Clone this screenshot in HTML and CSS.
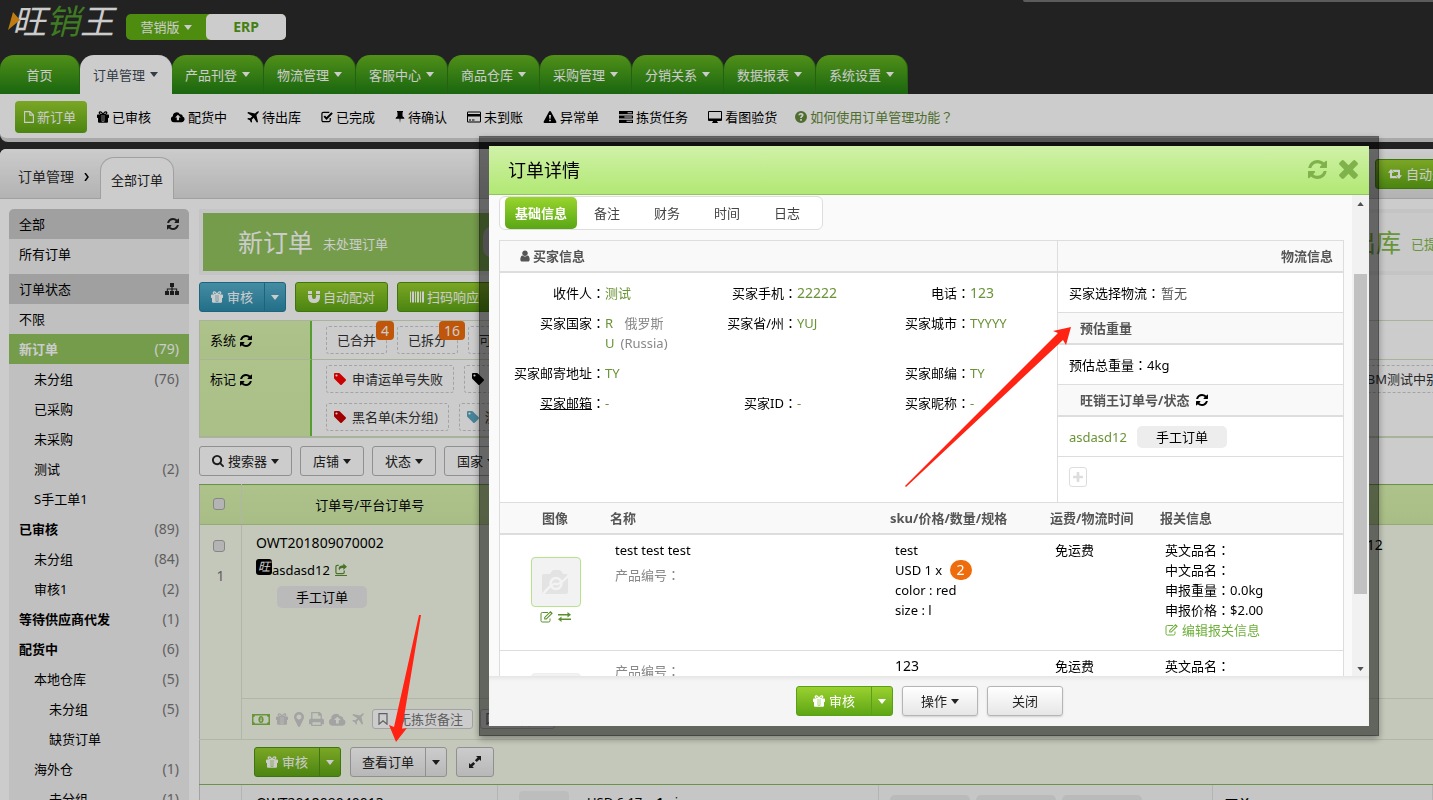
FILE: index.html
```html
<!DOCTYPE html>
<html lang="zh-CN">
<head>
<meta charset="utf-8">
<title>旺销王 - 订单管理</title>
<link rel="stylesheet" href="styles.css">
</head>
<body>
<svg class="sprite" aria-hidden="true">
  <symbol id="caret" viewBox="0 0 8 5"><path d="M0 0h8L4 5z"/></symbol>
  <symbol id="refresh" viewBox="128 128 1536 1536"><path d="M1639 1056q0 5-1 7-64 268-268 434.500t-478 166.500q-146 0-282.500-55t-243.500-157l-129 129q-19 19-45 19t-45-19-19-45v-448q0-26 19-45t45-19h448q26 0 45 19t19 45-19 45l-137 137q71 66 161 102t187 36q134 0 250-65t186-179q11-17 53-117 8-23 30-23h192q13 0 22.500 9.500t9.500 22.500zm25-800v448q0 26-19 45t-45 19h-448q-26 0-45-19t-19-45 19-45l138-138q-148-137-349-137-134 0-250 65t-186 179q-11 17-53 117-8 23-30 23h-199q-13 0-22.500-9.500t-9.500-22.500v-7q65-268 270-434.500t480-166.500q146 0 284 55.500t245 156.500l130-129q19-19 45-19t45 19 19 45z"/></symbol>
  <symbol id="times" viewBox="300 430 1192 1192"><path transform="translate(0 66)" d="M1490 1322q0 40-28 68l-136 136q-28 28-68 28t-68-28l-294-294-294 294q-28 28-68 28t-68-28l-136-136q-28-28-28-68t28-68l294-294-294-294q-28-28-28-68t28-68l136-136q28-28 68-28t68 28l294 294 294-294q28-28 68-28t68 28l136 136q28 28 28 68t-28 68l-294 294 294 294q28 28 28 68z"/></symbol>
  <symbol id="search" viewBox="64 128 1664 1664"><path d="M1216 832q0-185-131.500-316.500t-316.500-131.500-316.500 131.500-131.500 316.500 131.500 316.500 316.500 131.500 316.500-131.500 131.500-316.500zm512 832q0 52-38 90t-90 38q-54 0-90-38l-343-342q-179 124-399 124-143 0-273.500-55.500t-225-150-150-225-55.500-273.500 55.500-273.500 150-225 225-150 273.500-55.500 273.500 55.500 225 150 150 225 55.500 273.500q0 220-124 399l343 343q37 37 37 90z"/></symbol>
  <symbol id="user" viewBox="206 128 1380 1536"><path d="M1536 1399q0 109-62.500 187t-150.500 78h-854q-88 0-150.500-78t-62.500-187q0-85 8.500-160.500t31.500-152 58.500-131 94-89 134.500-34.500q131 128 313 128t313-128q76 0 134.500 34.500t94 89 58.500 131 31.500 152 8.500 160.500zm-256-887q0 159-112.500 271.500t-271.500 112.500-271.500-112.500-112.500-271.500 112.500-271.500 271.500-112.500 271.500 112.500 112.500 271.500z"/></symbol>
  <symbol id="plus" viewBox="192 128 1408 1408"><path d="M1600 736v192q0 40-28 68t-68 28h-416v416q0 40-28 68t-68 28h-192q-40 0-68-28t-28-68v-416h-416q-40 0-68-28t-28-68v-192q0-40 28-68t68-28h416v-416q0-40 28-68t68-28h192q40 0 68 28t28 68v416h416q40 0 68 28t28 68z"/></symbol>
  <symbol id="pin-map" viewBox="384 128 1024 1536"><path d="M1152 640q0-106-75-181t-181-75-181 75-75 181 75 181 181 75 181-75 75-181zm256 0q0 109-33 179l-364 774q-16 33-47.500 52t-67.500 19-67.500-19-46.500-52l-365-774q-33-70-33-179 0-212 150-362t362-150 362 150 150 362z"/></symbol>
  <symbol id="gift" viewBox="0 0 12 12"><path fill-rule="evenodd" d="M0 4.200q0-.7.700-.7H3.200Q1.300 3 1.600 1.600 2 .2 3.500.3 4.800.4 6 2.200 7.200.4 8.500.3q1.500-.1 1.900 1.300.3 1.400-1.600 1.900h2.500q.7 0 .7.700v2.400q0 .3-.4.300H11v3.800q0 1-1 1H2q-1 0-1-1V6.900H.4Q0 6.900 0 6.600zM2.800 2q0 .8 1 .8h1.300Q4.300 1.500 3.600 1.400q-.8 0-.8.600zm6.400 0q0-.6-.8-.6-.7.100-1.500 1.400h1.300q1 0 1-.8zM4.700 4v6.400h2.600V4z"/><path d="M5.300 4h1.400v6H5.300z"/></symbol>
  <symbol id="cloud-up" viewBox="0 0 15 11"><path fill-rule="evenodd" d="M3.300 11A3.200 3.200 0 0 1 2 4.800 4.100 4.100 0 0 1 9.700 2.700 2.200 2.200 0 0 1 12.500 5a3.100 3.100 0 0 1-.7 6zM6.200 6v3h2.400V6h1.800L7.400 3 4.400 6z"/></symbol>
  <symbol id="plane" viewBox="0 0 12 12"><path d="M11.800.2Q11 0 10 .8L8 2.600 1.200 1 .3 2l5 3.300L3.300 7.300l-2.100-.4L.2 7.900l2.600 1.300L4.100 11.800l1-1-.4-2.100 2-2 3.300 5 1-.9L9.400 4l1.800-2q.8-1 .6-1.800z"/></symbol>
  <symbol id="check-sq" viewBox="0 0 13 12"><path d="M10 7v2.500Q10 11 8.500 11h-6Q1 11 1 9.500v-7Q1 1 2.500 1H9" fill="none" stroke="currentColor" stroke-width="1.300"/><path d="m3.500 5 2.500 2.700L12 1.500" fill="none" stroke="currentColor" stroke-width="2.200"/></symbol>
  <symbol id="thumbtack" viewBox="0 0 9 12"><path d="M1.500 0h6v1.200H7v4q1.700.8 2 2.500H5L4.500 12 4 7.700H0q.3-1.700 2-2.500v-4h-.5z"/></symbol>
  <symbol id="card" viewBox="0 0 14 11"><path fill-rule="evenodd" d="M1.300 0h11.400Q14 0 14 1.300v8.400q0 1.300-1.300 1.300H1.300Q0 11 0 9.700V1.300Q0 0 1.300 0zM1 1v1.600h12V1zm0 4v5h12V5zm1 3h2v1H2zm3 0h2.500v1H5z"/></symbol>
  <symbol id="warn" viewBox="0 0 13 12"><path fill-rule="evenodd" d="M6.500 0q.6 0 .9.500l5.400 10q.5 1.500-.9 1.500H1.100q-1.400 0-.9-1.500l5.400-10Q5.900 0 6.500 0zm-1 4 .4 3.700h1.200L7.500 4zm.1 4.700v1.600h1.800V8.700z"/></symbol>
  <symbol id="tasks" viewBox="0 0 13 11"><path fill-rule="evenodd" d="M0 0h13v3H0zm8 1v1h4V1zM0 4h13v3H0zm5 1v1h7V5zM0 8h13v3H0zm7 1v1h5V9z"/></symbol>
  <symbol id="desktop" viewBox="0 0 14 12"><path fill-rule="evenodd" d="M1 0h12q1 0 1 1v8q0 1-1 1H9q0 1 .8 1.300V12H4.200v-.7Q5 11 5 10H1q-1 0-1-1V1q0-1 1-1zm0 1v6.500h12V1z"/></symbol>
  <symbol id="question" viewBox="0 0 11 11"><path fill-rule="evenodd" d="M5.500 0a5.500 5.500 0 1 1 0 11 5.500 5.500 0 0 1 0-11zM3 4h1.600Q4.800 3 5.700 3.200q.8.500 0 1.300-1.200.8-1 2h1.600q0-.8 1-1.400 1-1 .3-2.300Q6.700 1.600 5 1.900 3.200 2.300 3 4zm1.700 3.300v1.600h1.600V7.300z"/></symbol>
  <symbol id="file" viewBox="0 0 10 12"><path d="M.6.600h5.400l3.400 3.300v7.500H.6zM5.800.6v3.500h3.600" fill="none" stroke="currentColor" stroke-width="1.100"/></symbol>
  <symbol id="sitemap" viewBox="0 0 14 12"><path d="M5 0h4v4H7.600v1.400h4.600V8H14v4h-4V8h1.200V6.400H7.600V8H9v4H5V8h1.400V6.400H2.800V8H4v4H0V8h1.800V5.400h4.600V4H5z"/></symbol>
  <symbol id="magnet" viewBox="0 0 12 12"><path d="M0 0h4v3H0zM8 0h4v3H8zM0 4h4v2q0 2 2 2t2-2V4h4v2.500Q11.500 12 6 12T0 6.500z"/></symbol>
  <symbol id="barcode" viewBox="0 0 14 11"><path d="M0 0h1v11H0zM2 0h2v11H2zM5 0h1v11H5zM7 0h2v11H7zM10 0h1v11h-1zM12 0h2v11h-2z"/></symbol>
  <symbol id="tag" viewBox="0 0 12 12"><path fill-rule="evenodd" d="M0 1q0-1 1-1h4l.9.500 5.800 5.800q.6.700 0 1.400L7.700 11.700q-.7.600-1.400 0L.5 5.900Q0 5.500 0 5zm2.500.4a1.100 1.100 0 1 0 0 2.200 1.100 1.100 0 0 0 0-2.200z"/></symbol>
  <symbol id="share" viewBox="0 0 13 12"><path d="M10 7.500v2Q10 11 8.500 11h-6Q1 11 1 9.500v-6Q1 2 2.500 2H4" fill="none" stroke="currentColor" stroke-width="1.300"/><path d="M9 0l4 3.500L9 7V5Q5 4.700 4.600 8 2 2.200 9 2z"/></symbol>
  <symbol id="money" viewBox="0 0 18 11"><path fill-rule="evenodd" d="M0 0h18v11H0zm3 1.500Q3 3 1.500 3v5Q3 8 3 9.500h12Q15 8 16.500 8V3Q15 3 15 1.500zM9 2c3.500 0 3.500 7 0 7s-3.500-7 0-7zM8 4h.6v2.500H8v.8h2v-.8h-.5V3.400z"/></symbol>
  <symbol id="print" viewBox="0 0 14 13"><path fill-rule="evenodd" d="M2 0h8l2 2v4q2 0 2 2v3.500h-2V13H2v-1.500H0V8q0-2 2-2zm1.200 1.200v5h7.600V3.400H8.600V1.200zm0 8.300v2.300h7.600V9.500z"/></symbol>
  <symbol id="bookmark" viewBox="0 0 10 12"><path d="M1 .6h8v10.600L5 7.800 1 11.200z" fill="none" stroke="currentColor" stroke-width="1.200"/></symbol>
  <symbol id="expand" viewBox="0 0 12 12"><path d="M7 0h5v5l-1.600-1.600-2.700 2.700-1.800-1.800 2.700-2.700zM5 12H0V7l1.600 1.600 2.700-2.700 1.800 1.800-2.700 2.700z"/></symbol>
  <symbol id="retweet" viewBox="0 0 14 10"><path d="M3 0l3 3.700H4V7h4l2 2.300H2.500Q2 9.300 2 8.700v-5H0zM11 10 8 6.300h2V3H6L4 .7h7.500q.5 0 .5.600v5h2z"/></symbol>
  <symbol id="edit" viewBox="0 0 13 12"><path d="M10 7.500V9.700Q10 11 8.700 11H2.300Q1 11 1 9.700V2.800Q1 1.500 2.300 1.500H8" fill="none" stroke="currentColor"/><path d="M4.200 8.600V6.300L10.500 0l2.300 2.300-6.300 6.300zm1-1.800v.8h.8l5-5-.8-.8z" fill-rule="evenodd"/></symbol>
  <symbol id="exchange" viewBox="0 0 13 10"><path d="M0 2h9.500V0L13 2.700 9.500 5.400V3.400H0zM13 6.600H3.500v-2L0 7.300 3.500 10V8H13z"/></symbol>
  <symbol id="camera" viewBox="0 0 28 24"><path d="M2 4h6l2-3q.6-1 2-1h5q1.400 0 2 1l2 3h3q2 0 2 2v16q0 2-2 2H2q-2 0-2-2V6q0-2 2-2z" fill="#e3e3e3"/><circle cx="14" cy="13.500" r="5.500" fill="none" stroke="#f3f3f3" stroke-width="2.500"/><path d="M1 24q10-12 13-10t14-10" fill="none" stroke="#f3f3f3" stroke-width="2.500"/></symbol>
</svg>

<div class="page">
  <header class="top">
    <div class="brand">
      <div class="logo">
        <svg class="beak" viewBox="0 0 12 18"><path d="M0 18 5 0l7 8z"/></svg>
        <span>旺</span><span class="logo-green">销</span><span>王</span>
      </div>
      <div class="switch">
        <button class="sw-on" type="button">营销版<svg class="caret"><use href="#caret"/></svg></button>
        <button class="sw-erp" type="button">ERP</button>
      </div>
    </div>
    <nav class="tabs">
      <a href="#" class="tab home">首页</a>
      <a href="#" class="tab active">订单管理<svg class="caret"><use href="#caret"/></svg></a>
      <a href="#" class="tab">产品刊登<svg class="caret"><use href="#caret"/></svg></a>
      <a href="#" class="tab">物流管理<svg class="caret"><use href="#caret"/></svg></a>
      <a href="#" class="tab">客服中心<svg class="caret"><use href="#caret"/></svg></a>
      <a href="#" class="tab">商品仓库<svg class="caret"><use href="#caret"/></svg></a>
      <a href="#" class="tab">采购管理<svg class="caret"><use href="#caret"/></svg></a>
      <a href="#" class="tab">分销关系<svg class="caret"><use href="#caret"/></svg></a>
      <a href="#" class="tab">数据报表<svg class="caret"><use href="#caret"/></svg></a>
      <a href="#" class="tab">系统设置<svg class="caret"><use href="#caret"/></svg></a>
    </nav>
    <i class="top-strip"></i>
  </header>

  <nav class="submenu">
    <a href="#" class="current"><svg class="w10"><use href="#file"/></svg>新订单</a>
    <a href="#"><svg class="w12"><use href="#gift"/></svg>已审核</a>
    <a href="#"><svg class="w14"><use href="#cloud-up"/></svg>配货中</a>
    <a href="#"><svg class="w12"><use href="#plane"/></svg>待出库</a>
    <a href="#"><svg class="w12"><use href="#check-sq"/></svg>已完成</a>
    <a href="#"><svg class="w10"><use href="#thumbtack"/></svg>待确认</a>
    <a href="#"><svg class="w14"><use href="#card"/></svg>未到账</a>
    <a href="#"><svg class="w14"><use href="#warn"/></svg>异常单</a>
    <a href="#"><svg class="w14"><use href="#tasks"/></svg>拣货任务</a>
    <a href="#"><svg class="w14"><use href="#desktop"/></svg>看图验货</a>
    <a href="#" class="help"><svg class="w12"><use href="#question"/></svg><span>如何使用订单管理功能<span class="mid">？</span></span></a>
  </nav>

  <main class="panel">
    <div class="crumbs">
      <span class="crumb">订单管理</span>
      <svg class="chev" viewBox="0 0 5 8"><path d="m1 0 3 4-3 4" fill="none" stroke="currentColor" stroke-width="1.500"/></svg>
      <a href="#" class="crumb-tab">全部订单</a>
      <button class="btn green auto" type="button"><svg class="w14"><use href="#retweet"/></svg>自动处理</button>
    </div>

    <div class="columns">
      <aside class="side">
        <div class="side-head"><span>全部</span><svg class="w12"><use href="#refresh"/></svg></div>
        <a href="#" class="gap-after"><span>所有订单</span></a>
        <div class="side-head"><span>订单状态</span><svg class="w14"><use href="#sitemap"/></svg></div>
        <a href="#"><span>不限</span></a>
        <a href="#" class="sel"><b>新订单</b><em>(79)</em></a>
        <a href="#" class="l1"><span>未分组</span><em>(76)</em></a>
        <a href="#" class="l1"><span>已采购</span></a>
        <a href="#" class="l1"><span>未采购</span></a>
        <a href="#" class="l1"><span>测试</span><em>(2)</em></a>
        <a href="#" class="l1"><span>S手工单1</span></a>
        <a href="#"><b>已审核</b><em>(89)</em></a>
        <a href="#" class="l1"><span>未分组</span><em>(84)</em></a>
        <a href="#" class="l1"><span>审核1</span><em>(2)</em></a>
        <a href="#"><b>等待供应商代发</b><em>(1)</em></a>
        <a href="#"><b>配货中</b><em>(6)</em></a>
        <a href="#" class="l1"><span>本地仓库</span><em>(5)</em></a>
        <a href="#" class="l2"><span>未分组</span><em>(5)</em></a>
        <a href="#" class="l2"><span>缺货订单</span></a>
        <a href="#" class="l1"><span>海外仓</span><em>(1)</em></a>
        <a href="#" class="l2"><span>未分组</span><em>(1)</em></a>
      </aside>

      <section class="content">
        <div class="steps">
          <div class="step on"><h2>新订单</h2><span>未处理订单</span><i class="pill-note"></i></div>
          <div class="step"><h2>配货中</h2><span>正在配货</span></div>
          <div class="step"><h2>待出库</h2><span>已提交物流</span></div>
        </div>

        <div class="actions">
          <div class="split blue"><button type="button"><svg class="w12"><use href="#gift"/></svg>审核</button><button type="button" aria-label="更多"><svg class="caret"><use href="#caret"/></svg></button></div>
          <button class="btn green" type="button"><svg class="w12"><use href="#magnet"/></svg>自动配对</button>
          <button class="btn green" type="button"><svg class="w14"><use href="#barcode"/></svg>扫码响应</button>
        </div>

        <div class="filters">
          <div class="f-label">系统<svg class="w12"><use href="#refresh"/></svg></div>
          <div class="f-body">
            <div class="chips">
              <span class="chip">已合并<i class="badge">4</i></span>
              <span class="chip">已拆分<i class="badge">16</i></span>
              <span class="chip">可合并</span>
            </div>
          </div>
          <div class="f-label">标记<svg class="w12"><use href="#refresh"/></svg></div>
          <div class="f-body">
            <div class="chips">
              <span class="chip"><svg class="w12 red"><use href="#tag"/></svg>申请运单号失败</span>
              <span class="chip wide"><svg class="w12 black"><use href="#tag"/></svg>待跟进</span>
              <span class="chip"><svg class="w12 black"><use href="#tag"/></svg>FBM测试中别动</span>
            </div>
            <div class="chips">
              <span class="chip"><svg class="w12 dark-red"><use href="#tag"/></svg>黑名单(未分组)</span>
              <span class="chip"><svg class="w12 teal"><use href="#tag"/></svg>测试标记</span>
            </div>
          </div>
        </div>

        <div class="selects">
          <button class="btn plain" type="button"><svg class="w12"><use href="#search"/></svg>搜索器<svg class="caret"><use href="#caret"/></svg></button>
          <button class="btn plain" type="button">店铺<svg class="caret"><use href="#caret"/></svg></button>
          <button class="btn plain" type="button">状态<svg class="caret"><use href="#caret"/></svg></button>
          <button class="btn plain" type="button">国家<svg class="caret"><use href="#caret"/></svg></button>
        </div>

        <table class="orders">
          <colgroup><col class="o1"><col class="o2"><col class="o3"><col class="o4"><col></colgroup>
          <thead><tr><th><input type="checkbox" aria-label="全选"></th><th>订单号/平台订单号</th><th></th><th></th><th></th></tr></thead>
          <tbody>
            <tr class="main-row">
              <td class="pick"><input type="checkbox" aria-label="选择订单"><p>1</p></td>
              <td class="order-cell">
                <p class="num">OWT201809070002</p>
                <p class="src"><i class="mini">旺</i>asdasd12 <a href="#" aria-label="打开"><svg class="w12"><use href="#share"/></svg></a></p>
                <span class="type">手工订单</span>
              </td>
              <td></td><td></td><td class="date num">2018-09-07 11:15:12</td>
            </tr>
            <tr class="note-row">
              <td></td>
              <td colspan="4"><div class="notes">
                <svg class="cash"><use href="#money"/></svg>
                <svg class="w14"><use href="#gift"/></svg>
                <svg class="w10 tall"><use href="#pin-map"/></svg>
                <svg class="w15"><use href="#print"/></svg>
                <svg class="w17"><use href="#cloud-up"/></svg>
                <svg class="w14"><use href="#plane"/></svg>
                <button type="button" class="note"><svg class="w10"><use href="#bookmark"/></svg>无拣货备注</button>
                <button type="button" class="note"><svg class="w10"><use href="#bookmark"/></svg>无备注</button>
              </div></td>
            </tr>
            <tr class="tool-row"><td colspan="5"><div class="tools">
              <div class="split green"><button type="button"><svg class="w12"><use href="#gift"/></svg>审核</button><button type="button" aria-label="更多"><svg class="caret"><use href="#caret"/></svg></button></div>
              <div class="split plain"><button type="button">查看订单</button><button type="button" aria-label="更多"><svg class="caret"><use href="#caret"/></svg></button></div>
              <button class="btn plain" type="button" aria-label="展开"><svg class="w12"><use href="#expand"/></svg></button>
            </div></td></tr>
            <tr class="next-row">
              <td></td>
              <td class="order-cell num">OWT201809040013</td>
              <td><div class="goods"><i class="thumb-ph"></i><p>USD 6.17 x <b>1</b> piece</p></div></td>
              <td><div class="ph-row"><i></i><i></i><i></i></div></td>
              <td class="due"><b>下单</b></td>
            </tr>
          </tbody>
        </table>
      </section>
    </div>
  </main>
</div>

<div class="shade"></div>

<div class="modal" role="dialog" aria-labelledby="dlg-title">
  <header class="m-head">
    <h1 id="dlg-title">订单详情</h1>
    <button type="button" aria-label="刷新"><svg><use href="#refresh"/></svg></button>
    <button type="button" aria-label="关闭窗口"><svg><use href="#times"/></svg></button>
  </header>
  <div class="m-body">
    <div class="m-scroll">
      <nav class="m-tabs">
        <a href="#" class="on">基础信息</a><a href="#">备注</a><a href="#">财务</a><a href="#">时间</a><a href="#">日志</a>
      </nav>
      <div class="sheet">
        <div class="info">
          <section class="buyer">
            <h3><svg class="w10"><use href="#user"/></svg>买家信息</h3>
            <dl>
              <dt>收件人<span class="mid">：</span></dt><dd>测试</dd>
              <dt>买家手机<span class="mid">：</span></dt><dd class="num">22222</dd>
              <dt>电话<span class="mid">：</span></dt><dd class="num">123</dd>
              <dt>买家国家<span class="mid">：</span></dt><dd class="country"><span>R<br>U</span><small>俄罗斯<br>(Russia)</small></dd>
              <dt>买家省/州<span class="mid">：</span></dt><dd>YUJ</dd>
              <dt>买家城市<span class="mid">：</span></dt><dd>TYYYY</dd>
              <dt>买家邮寄地址<span class="mid">：</span></dt><dd class="span3">TY</dd>
              <dt>买家邮编<span class="mid">：</span></dt><dd>TY</dd>
              <dt><u>买家邮箱</u><span class="mid">：</span></dt><dd>-</dd>
              <dt>买家ID<span class="mid">：</span></dt><dd>-</dd>
              <dt>买家昵称<span class="mid">：</span></dt><dd>-</dd>
            </dl>
          </section>
          <section class="ship">
            <h3 class="right">物流信息</h3>
            <p>买家选择物流<span class="mid">：</span><span class="muted">暂无</span></p>
            <h3>预估重量</h3>
            <p>预估总重量<span class="mid">：</span>4kg</p>
            <h3>旺销王订单号/状态<svg class="w12 black"><use href="#refresh"/></svg></h3>
            <p><a href="#">asdasd12</a><span class="type">手工订单</span></p>
            <p class="last"><button type="button" class="add" aria-label="添加"><svg class="w10"><use href="#plus"/></svg></button></p>
          </section>
        </div>
        <table class="items">
          <colgroup><col class="c1"><col class="c2"><col class="c3"><col class="c1"><col></colgroup>
          <thead><tr><th class="center">图像</th><th>名称</th><th>sku/价格/数量/规格</th><th>运费/物流时间</th><th>报关信息</th></tr></thead>
          <tbody>
            <tr>
              <td><div class="pic"><span class="frame"><svg><use href="#camera"/></svg></span><span class="links"><svg class="w13"><use href="#edit"/></svg><svg class="w13"><use href="#exchange"/></svg></span></div></td>
              <td><p>test test test</p><p class="sku-no">产品编号<span class="mid">：</span></p></td>
              <td><p>test</p><p>USD 1 x <span class="qty">2</span></p><p>color : red</p><p>size : l</p></td>
              <td><p>免运费</p></td>
              <td><p>英文品名<span class="mid">：</span></p><p>中文品名<span class="mid">：</span></p><p>申报重量<span class="mid">：</span>0.0kg</p><p>申报价格<span class="mid">：</span>$2.00</p><p><a href="#"><svg class="w13"><use href="#edit"/></svg>编辑报关信息</a></p></td>
            </tr>
            <tr>
              <td><div class="pic"><span class="frame"></span></div></td>
              <td><p class="sku-no">产品编号<span class="mid">：</span></p></td>
              <td><p class="num">123</p></td>
              <td><p>免运费</p></td>
              <td><p>英文品名<span class="mid">：</span></p></td>
            </tr>
          </tbody>
        </table>
      </div>
    </div>
    <div class="bar"><svg class="arr up"><use href="#caret"/></svg><i></i><svg class="arr"><use href="#caret"/></svg></div>
  </div>
  <footer class="m-foot">
    <div class="split green bright"><button type="button"><svg class="w12"><use href="#gift"/></svg>审核</button><button type="button" aria-label="更多"><svg class="caret"><use href="#caret"/></svg></button></div>
    <button class="btn plain raised" type="button">操作<svg class="caret"><use href="#caret"/></svg></button>
    <button class="btn plain raised" type="button">关闭</button>
  </footer>
</div>

<svg class="marks" viewBox="0 0 1433 800" aria-hidden="true">
  <path d="M905 486 1058 333 1053 331 1071 327 1066 345 1063 340 906 487z"/>
  <path d="M421 615 402 729 407 728 396 742 389 725 394 727 419 615z"/>
</svg>
</body>
</html>
```

FILE: styles.css
```css
* { box-sizing: border-box; }
html, body { height: 100%; margin: 0; overflow: hidden; }
body, button, input {
  font-family: "Noto Sans", "Noto Sans CJK SC", sans-serif;
  font-size: 13px;
  line-height: 20px;
}
body { background: #2b2b2b; color: #000; text-spacing-trim: space-all; }
p, h1, h2, h3, dl, dd { margin: 0; }
h1, h2 { font-weight: 400; }
a { color: inherit; text-decoration: none; }
i, em { font-style: normal; }
button { border: 0; padding: 0; background: none; color: inherit; }
svg { fill: currentColor; flex: none; }
.sprite { position: absolute; width: 0; height: 0; }
.page { height: 100%; overflow: hidden; }
.mid { display: inline-block; line-height: 18px; font-family: "Noto Sans CJK TC", sans-serif; }
.num { font-size: 14px; }
.caret { width: 8px; height: 5px; }
.w10 { width: 10px; height: 12px; }
.w12 { width: 12px; height: 12px; }
.w13 { width: 13px; height: 12px; }
.w14 { width: 14px; height: 12px; }
.w15 { width: 15px; height: 14px; }
.w17 { width: 17px; height: 13px; }
.tall { height: 15px; }
.red { color: #ff0000; }
.dark-red { color: #c80000; }
.black { color: #000; }
.teal { color: #5aa5bf; }

/* header */
.top { position: relative; background: #2b2b2b; }
.top-strip { position: absolute; top: 0; right: 0; width: 410px; height: 2px; background: #737373; border-bottom-left-radius: 4px; }
.brand { display: flex; align-items: flex-start; height: 55px; padding-left: 12px; }
.logo { position: relative; display: flex; width: 106px; font-size: 34px; line-height: 42px; font-style: italic; color: #fff; }
.logo-green { color: #4f9a2c; }
.beak { position: absolute; left: -4px; top: 12px; width: 12px; height: 18px; fill: #f09a18; }
.switch { display: flex; margin: 14px 0 0 8px; border-radius: 5px; background: #62b015; }
.switch button { width: 80px; height: 26px; }
.sw-on { color: #fff; }
.sw-on .caret { margin: 0 0 2px 4px; }
.switch .sw-erp { background: #fff; color: #57a01a; border-radius: 5px; font-size: 14px; font-weight: 700; }
.tabs { display: flex; }
.tab {
  display: flex; align-items: center; justify-content: center; gap: 5px;
  width: 92px; height: 39px; color: #fff;
  background: linear-gradient(#65b41f, #218014);
  border-radius: 14px 14px 0 0; border-right: 1px solid #2f7a14;
}
.tab.home { width: 80px; }
.tab.active { background: #fff; color: #3f4c55; border-color: #fff; }

/* second level menu */
.submenu {
  display: flex; align-items: flex-start; height: 48px; padding: 7px 15px 0;
  background: #fff; border-bottom: 4px solid #d4d4d4; border-bottom-left-radius: 8px;
}
.submenu a { display: flex; align-items: center; gap: 3px; padding: 0 10px; line-height: 32px; }
.submenu .current { width: 72px; padding: 0 9px; color: #fff; background: linear-gradient(#9ad02f, #5ea615); border-radius: 4px; }
.submenu .help { color: #63893a; padding-left: 8px; }

/* work area */
.panel { margin-top: 7px; background: #fff; border-top-left-radius: 6px; overflow: hidden; min-height: 651px; }
.crumbs { display: flex; height: 50px; padding-left: 18px; background: linear-gradient(#fff, #e0e0e0); border-bottom: 1px solid #c9c9c9; }
.crumb { font-size: 14px; line-height: 56px; color: #2d2d2d; }
.chev { width: 5px; height: 8px; margin: 24px 11px 0 10px; }
.crumb-tab {
  height: 42px; margin-top: 8px; padding: 0 10px; line-height: 44px; color: #222;
  background: #fff; border: 1px solid #c9c9c9; border-bottom: 0; border-radius: 14px 14px 0 0;
}
.crumbs .auto { margin: 10px -38px 0 auto; }
.columns { display: flex; gap: 10px; padding: 10px 0 0 9px; }

.side { flex: 0 0 180px; background: #f0f0f0; border-radius: 5px 5px 0 0; overflow: hidden; }
.side > * { display: flex; align-items: center; justify-content: space-between; height: 30px; padding: 0 10px; }
.side .side-head { background: #c9c9c9; }
.side-head svg { color: #222; }
.side .gap-after { margin-bottom: 5px; }
.side em { font-size: 14px; color: #777; }
.side .l1 { padding-left: 25px; }
.side .l2 { padding-left: 40px; }
.side .sel { background: #92c45e; color: #fff; }
.side .sel em { color: #fff; }

.content { flex: 1; min-width: 0; }
.steps { display: flex; height: 66px; border: 4px solid #f5f5f5; border-right: 0; overflow: hidden; }
.step { flex: 0 0 544px; display: flex; align-items: center; gap: 10px; padding-left: 35px; color: #82bb48; background: #fcfcfc; }
.step.on { background: #92c45e; color: #fff; }
.step h2 { font-size: 25px; line-height: 52px; }
.step span { padding-top: 4px; }
.pill-note { width: 160px; height: 32px; margin-left: 85px; border-radius: 10px; background: #c8c8c8; }

.actions, .selects { display: flex; gap: 9px; }
.actions { margin-top: 7px; }
.btn, .split { height: 30px; border: 1px solid; border-radius: 3px; }
.btn { display: flex; align-items: center; justify-content: center; gap: 4px; padding: 0 12px; }
.actions .btn { gap: 3px; }
.split { display: flex; }
.split button { display: flex; align-items: center; justify-content: center; gap: 4px; padding: 0 11px; }
.split button + button { width: 21px; padding: 0; border-left: 1px solid; border-color: inherit; }
.green { color: #fff; border-color: #4f9314; background: linear-gradient(#9ad02f, #5ea615); }
.green.bright { border-color: #58a01a; }
.blue { color: #fff; border-color: #247f9c; background: linear-gradient(#56b0cc, #2c8bab); }
.plain { color: #222; border-color: #b5b5b5; background: linear-gradient(#fff, #e6e6e6); }
.raised { box-shadow: 0 1px 2px rgba(0, 0, 0, .15); }

.filters { display: grid; grid-template-columns: 112px 1fr; margin-top: 8px; border: 1px solid #d3e0c0; border-width: 1px 0 2px 1px; }
.f-label { display: flex; gap: 4px; padding: 9px 10px; background: linear-gradient(#d9f4ae, #d5f0ab); border-right: 2px solid #6bc53c; }
.f-label svg { margin-top: 5px; color: #000; }
.f-body { padding: 5px 0 5px 14px; }
.filters > :nth-child(-n+2) { border-bottom: 1px solid #d3e0c0; }
.chips { display: flex; gap: 10px; }
.chips + .chips { margin-top: 10px; }
.chip { position: relative; display: flex; align-items: center; gap: 6px; flex: none; height: 28px; padding: 0 10px; color: #333; border: 1px dashed #ccc; border-radius: 3px; }
.chip svg { margin-left: -3px; }
.chip.wide { flex-basis: 860px; }
.badge { position: absolute; right: -8px; top: -6px; padding: 0 5px; line-height: 19px; font-size: 14px; color: #fff; background: #ef6c0c; border-radius: 4px; }
.selects { gap: 8px; margin-top: 8px; }
.selects .plain { background: #fff; }

.orders { width: 100%; margin-top: 8px; table-layout: fixed; border-collapse: collapse; border-left: 1px solid #ccc; }
.o1 { width: 42px; }
.o2 { width: 256px; }
.o3 { width: 381px; }
.o4 { width: 334px; }
.orders th { height: 40px; padding: 0; font-weight: 400; background: linear-gradient(#d9f4ae, #d3eda8); border-top: 1px solid #82b85c; border-bottom: 1px solid #bcd796; }
.orders th:first-child, .pick, .note-row td:first-child { border-right: 1px solid #dfe4d2; }
.orders input { width: 12px; height: 12px; margin: 0 4px 0 0; appearance: none; background: #e2e2e2; border: 1px solid #a8a8a8; border-radius: 3px; }
.orders td { padding: 0; vertical-align: top; }
.main-row td, .note-row td, .tool-row td { background: #f6fbea; }
.main-row { height: 174px; }
.main-row .pick { padding-top: 12px; text-align: center; }
.pick p { margin-top: 9px; color: #777; font-size: 14px; }
.orders .order-cell { padding: 8px 0 0 14px; }
.src { display: flex; align-items: center; margin-top: 6px; }
.src a { display: flex; margin-left: 5px; color: #5c8f33; border-bottom: 1px solid; }
.mini { width: 16px; height: 16px; margin-bottom: 5px; border-radius: 3px; background: #000; color: #fff; font-size: 12px; line-height: 15px; text-align: center; font-style: italic; }
.type { display: inline-block; width: 90px; line-height: 22px; text-align: center; background: #e9e9e9; border-radius: 5px; }
.order-cell .type { margin: 6px 0 0 21px; }
.orders .date { padding-top: 10px; padding-left: 38px; }
.note-row td + td { border-top: 1px solid #dfe4d2; }
.notes { display: flex; align-items: center; gap: 5px; height: 40px; padding-left: 10px; color: #ccc; }
.cash { width: 18px; height: 11px; color: #82bb48; }
.note { display: flex; align-items: center; gap: 10px; height: 20px; margin-left: 2px; padding: 0 9px 0 5px; color: #777; background: #fff; border: 1px solid #ccc; border-radius: 3px; }
.tool-row td { border-top: 1px solid #dfe4d2; border-bottom: 1px solid #82b85c; }
.tools { display: flex; gap: 9px; height: 44px; padding: 7px 0 0 54px; }
.next-row { background: #f8f8f8; }
.next-row td { border-right: 1px solid #e2e2e2; }
.goods { display: flex; gap: 18px; padding-left: 21px; }
.goods p { padding-top: 7px; }
.thumb-ph { width: 50px; height: 50px; margin-top: 6px; border-radius: 4px; background: #ededed; }
.ph-row { display: flex; gap: 6px; padding: 10px 0 0 11px; }
.ph-row i { width: 80px; height: 22px; border-radius: 5px; background: #e9e9e9; }
.orders .due { padding: 9px 0 0 12px; }

/* dialog */
.shade { position: fixed; inset: 0; background: rgba(0, 0, 0, .2); }
.modal {
  position: fixed; left: 479px; top: 136px; width: 900px;
  border: 10px solid rgba(0, 0, 0, .5); background: #fafafa; background-clip: padding-box;
  box-shadow: 0 3px 7px rgba(0, 0, 0, .35);
}
.m-head { display: flex; align-items: center; gap: 12px; height: 49px; padding: 0 11px 0 19px; background: linear-gradient(#d0f1a8, #b2e874); border-bottom: 1px solid #91c35e; }
.m-head h1 { flex: 1; font-size: 18px; }
.m-head button { color: #80b24b; height: 20px; }
.m-head svg { width: 19px; height: 19px; }
.m-body { display: flex; height: 481px; overflow: hidden; }
.m-scroll { flex: 1; min-width: 0; padding: 1px 8px 0 10px; overflow: hidden; }
.m-tabs { display: inline-flex; padding: 0 5px; margin-bottom: 10px; vertical-align: top; background: #fff; border: 1px solid #ddd; border-radius: 6px; color: #444; }
.m-tabs a { padding: 0 17px; line-height: 32px; }
.m-tabs .on { padding: 0 10px; color: #fff; font-weight: 700; border-radius: 5px; background: linear-gradient(#99d52d, #59a615); }
.sheet { background: #fff; border: 1px solid #ddd; }
.info { display: flex; border-bottom: 1px solid #ddd; }
.buyer { flex: 1; }
.ship { flex: 0 0 286px; border-left: 1px solid #ddd; }
.sheet h3 { display: flex; align-items: center; gap: 3px; height: 32px; padding: 0 20px; font-size: 13px; font-weight: 700; color: #555; background: #f9f9f9; border-bottom: 2px solid #ddd; }
.sheet h3.right { justify-content: flex-end; padding-right: 10px; }
.sheet h3 .black { margin-left: 4px; }
.buyer dl { display: grid; grid-template-columns: 105px 76px 116px 75px 98px 1fr; row-gap: 10px; padding-top: 10px; }
.buyer dt { text-align: right; white-space: nowrap; }
.buyer dd { color: #6a9335; }
.buyer .span3 { grid-column: span 3; }
.country { display: flex; gap: 6px; }
.country small { font-size: 13px; color: #888; text-align: center; }
.ship p { display: flex; align-items: center; height: 40px; padding: 0 11px; border-bottom: 1px solid #ddd; }
.ship p + h3 { padding-left: 22px; }
.ship .last { height: 45px; border: 0; padding-bottom: 5px; }
.ship a { color: #6a9335; }
.ship .type { margin-left: 10px; background: #ededed; }
.muted { color: #555; margin-left: 1px; }
.add { display: flex; align-items: center; justify-content: center; width: 18px; height: 20px; border: 1px solid #ddd; border-radius: 3px; color: #ddd; }

.items { width: 100%; table-layout: fixed; border-collapse: collapse; }
.c1 { width: 110px; }
.c2 { width: 280px; }
.c3 { width: 160px; }
.items th { height: 31px; padding: 0; text-align: left; font-weight: 700; color: #555; background: #f9f9f9; border-bottom: 2px solid #ddd; }
.items .center { text-align: center; }
.items td { height: 116px; padding: 5px 0 0 5px; vertical-align: top; border-bottom: 1px solid #ddd; }
.items td:first-child { padding: 22px 0 0 1px; }
.items td p { height: 20px; }
.items td a { display: flex; align-items: center; gap: 4px; color: #6fb03c; }
.items .sku-no { margin-top: 5px; color: #888; }
.pic { display: flex; flex-direction: column; align-items: center; gap: 4px; color: #5a8f2c; }
.frame { display: flex; align-items: center; justify-content: center; width: 50px; height: 50px; background: #f2f2f2; border: 1px solid #b5e28a; border-radius: 4px; }
.frame svg { width: 28px; height: 24px; }
.links { display: flex; gap: 5px; }
.qty { display: inline-block; width: 22px; margin-left: 4px; text-align: center; font-size: 14px; color: #fff; background: #ef6c0c; border-radius: 10px; }
.items tr + tr .frame { border-color: #eee; }

.bar { flex: 0 0 17px; display: flex; flex-direction: column; align-items: center; padding: 7px 0 5px; background: #f1f1f1; color: #505050; }
.bar i { width: 13px; height: 320px; margin: 68px 0 auto; background: #c1c1c1; }
.arr { width: 7px; height: 4px; }
.arr.up { transform: rotate(180deg); }
.m-foot { display: flex; gap: 9px; height: 50px; padding: 10px 0 0 307px; background: #f5f5f5; box-shadow: inset 0 4px 4px -2px rgba(0, 0, 0, .08); }
.m-foot .split button:first-child { padding: 0 16px; }
.m-foot .btn { width: 76px; }

.marks { position: fixed; left: 0; top: 0; width: 1433px; height: 800px; fill: #ff2314; pointer-events: none; }
```
